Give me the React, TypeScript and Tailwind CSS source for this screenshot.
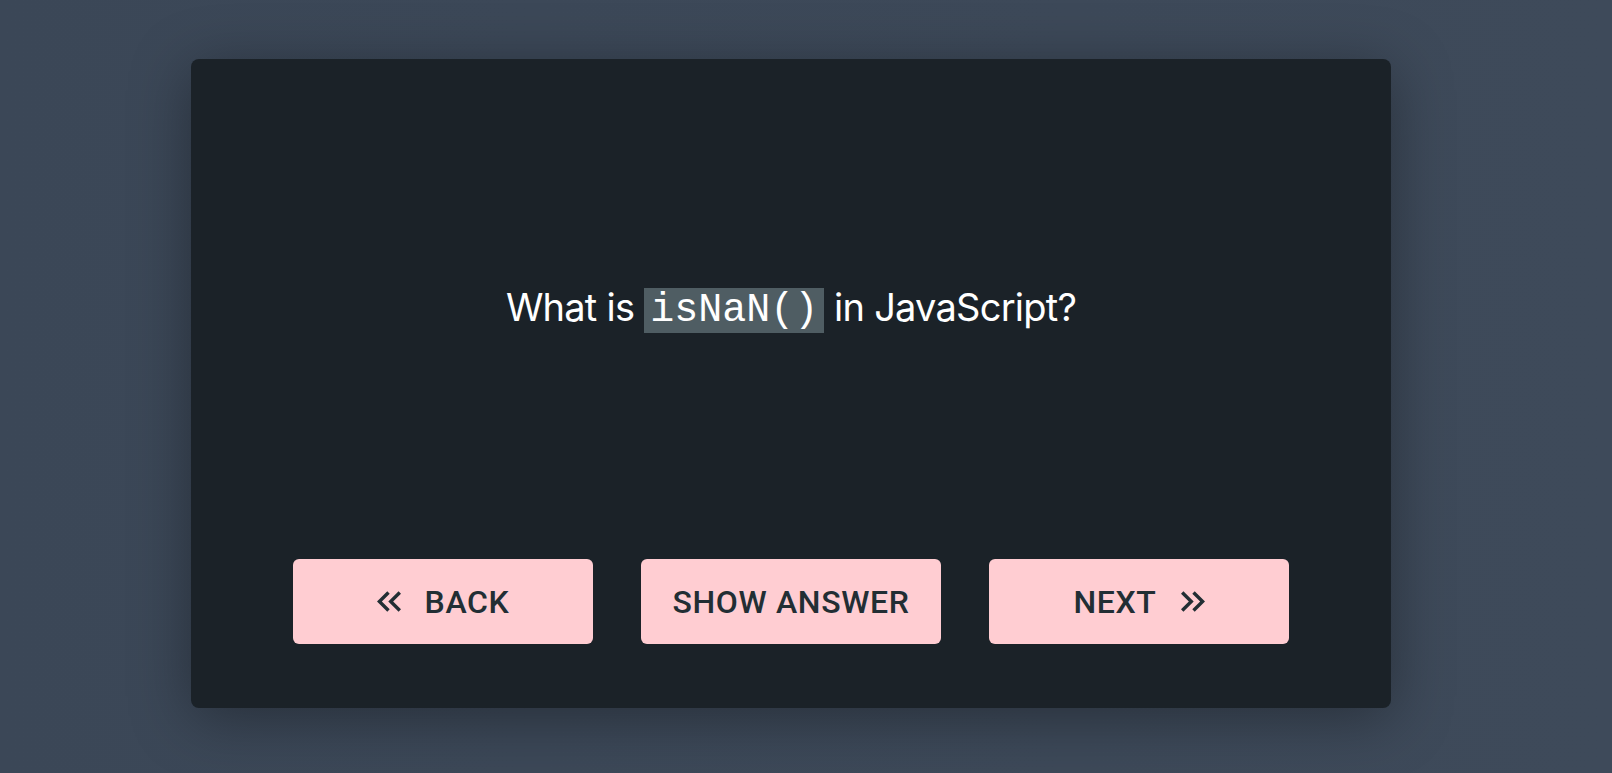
import React from 'react';

function DoubleArrow({ dir }: { dir: 'left' | 'right' }) {
    return (
        <svg width="24" height="21" viewBox="5 6 14 12" fill="currentColor" className={dir === 'right' ? 'rotate-180' : ''}>
            <path d="M17.59 18 19 16.59 14.42 12 19 7.41 17.59 6l-6 6z" />
            <path d="M11 18l1.41-1.41L7.83 12l4.58-4.59L11 6l-6 6z" />
        </svg>
    );
}

const btn =
    'h-[85px] rounded-md bg-[#ffcdd2] text-[#222e34] flex items-center justify-center gap-6 text-[32px] font-medium tracking-[0.02em] uppercase';

export default function App() {
    return (
        <div className="min-h-screen w-full bg-gradient-to-r from-[#3b4757] to-[#3e4a5a] pt-[59px] pl-[191px]" style={{ fontFamily: 'Inter, "Noto Sans", sans-serif' }}>
            <div className="w-[1200px] h-[649px] rounded-lg bg-[#1b2228] shadow-[0_10px_60px_rgba(0,0,0,0.35)] flex flex-col">
                <div className="flex-1 flex items-center justify-center">
                    <h1 className="text-[38px] tracking-[-0.02em] text-white font-normal leading-none">
                        What is{' '}
                        <code className="bg-[#4f5d63] px-1.5 py-0 text-[40px] tracking-normal" style={{ fontFamily: '"Liberation Mono", monospace' }}>
                            isNaN()
                        </code>{' '}
                        in JavaScript?
                    </h1>
                </div>
                <div className="grid grid-cols-3 gap-12 px-[102px] pb-[64px]" style={{ fontFamily: 'Roboto, sans-serif' }}>
                    <button className={btn}>
                        <DoubleArrow dir="left" />
                        <span>Back</span>
                    </button>
                    <button className={btn}>
                        <span>Show Answer</span>
                    </button>
                    <button className={btn}>
                        <span>Next</span>
                        <DoubleArrow dir="right" />
                    </button>
                </div>
            </div>
        </div>
    );
}
